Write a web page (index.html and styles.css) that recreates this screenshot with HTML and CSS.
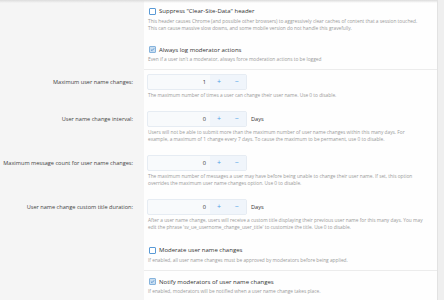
FILE: index.html
```html
<!DOCTYPE html>
<html>
<head>
<meta charset="utf-8">
<link rel="stylesheet" href="styles.css">
</head>
<body>
<div class="frame">
  <div class="main">
    <div class="topshade"></div>
    <div class="row check-row first">
      <div class="label"></div>
      <div class="ctrl">
        <label class="check"><span class="box"></span><span class="title">Suppress "Clear-Site-Data" header</span></label>
        <div class="desc">This header causes Chrome (and possible other browsers) to aggressively clear caches of content that a session touched.<br>This can cause massive slow downs, and some mobile version do not handle this gravefully.</div>
      </div>
    </div>
    <div class="row check-row sep">
      <div class="label"></div>
      <div class="ctrl">
        <label class="check"><span class="box on"><svg viewBox="0 0 8 8" width="5" height="5"><path d="M1.5 4.2 L3.3 5.8 L6.5 2.2" fill="none" stroke="#3d7fc1" stroke-width="1.2"/></svg></span><span class="title">Always log moderator actions</span></label>
        <div class="desc">Even if a user isn't a moderator, always force moderation actions to be logged</div>
      </div>
    </div>
    <div class="row num-row r1">
      <div class="label">Maximum user name changes:</div>
      <div class="ctrl">
        <div class="inline"><div class="spin"><span class="val">1</span><span class="btn">+</span><span class="btn">−</span></div></div>
        <div class="desc">The maximum number of times a user can change their user name. Use 0 to disable.</div>
      </div>
    </div>
    <div class="row num-row r2">
      <div class="label">User name change interval:</div>
      <div class="ctrl">
        <div class="inline"><div class="spin"><span class="val">0</span><span class="btn">+</span><span class="btn">−</span></div><span class="unit">Days</span></div>
        <div class="desc">Users will not be able to submit more than the maximum number of user name changes within this many days. For<br>example, a maximum of 1 change every 7 days. To cause the maximum to be permanent, use 0 to disable.</div>
      </div>
    </div>
    <div class="row num-row r3">
      <div class="label">Maximum message count for user name changes:</div>
      <div class="ctrl">
        <div class="inline"><div class="spin"><span class="val">0</span><span class="btn">+</span><span class="btn">−</span></div></div>
        <div class="desc">The maximum number of messages a user may have before being unable to change their user name. If set, this option<br>overrides the maximum user name changes option. Use 0 to disable.</div>
      </div>
    </div>
    <div class="row num-row r4">
      <div class="label">User name change custom title duration:</div>
      <div class="ctrl">
        <div class="inline"><div class="spin"><span class="val">0</span><span class="btn">+</span><span class="btn">−</span></div><span class="unit">Days</span></div>
        <div class="desc">After a user name change, users will receive a custom title displaying their previous user name for this many days. You may<br>edit the phrase 'sv_ue_usernome_change_user_title' to customize the title. Use 0 to disable.</div>
      </div>
    </div>
    <div class="row check-row sep r5">
      <div class="label"></div>
      <div class="ctrl">
        <label class="check"><span class="box"></span><span class="title">Moderate user name changes</span></label>
        <div class="desc">If enabled, all user name changes must be approved by moderators before being applied.</div>
      </div>
    </div>
    <div class="row check-row r6">
      <div class="label"></div>
      <div class="ctrl">
        <label class="check"><span class="box on"><svg viewBox="0 0 8 8" width="5" height="5"><path d="M1.5 4.2 L3.3 5.8 L6.5 2.2" fill="none" stroke="#3d7fc1" stroke-width="1.2"/></svg></span><span class="title">Notify moderators of user name changes</span></label>
        <div class="desc">If enabled, moderators will be notified when a user name change takes place.</div>
      </div>
    </div>
  </div>
  <div class="scroll"></div>
</div>
</body>
</html>
```
FILE: styles.css
```css
html, body {
  margin: 0;
  padding: 0;
}
body {
  width: 444px;
  height: 300px;
  overflow: hidden;
  background: #f5f5f5;
  font-family: "Open Sans", "Liberation Sans", sans-serif;
  color: #1d1d1d;
}
.frame {
  display: flex;
  height: 300px;
}
.main {
  position: relative;
  width: 438px;
  background: #f5f5f5;
}
.topshade {
  position: absolute;
  left: 0;
  right: 0;
  top: 0;
  height: 3px;
  background: linear-gradient(#dcdcdc, rgba(240,240,240,0));
}
.scroll {
  width: 6px;
  background: #efefef;
  border-left: 1px solid #e2e2e2;
}
.row {
  display: grid;
  grid-template-columns: 144px 1fr;
}
.label {
  text-align: right;
  padding-right: 11px;
  font-size: 5.6px;
  color: #444;
}
.ctrl {
  background: #fefefe;
  padding-left: 4px;
}
.check-row .ctrl {
  padding-top: 6px;
  padding-bottom: 6px;
}
.first .ctrl { padding-top: 6px; padding-bottom: 7px; }
.sep .ctrl { border-bottom: 1px solid #ececec; }
.check {
  display: flex;
  align-items: center;
  height: 10px;
}
.box {
  width: 5px;
  height: 5px;
  border: 1px solid #5a9ad6;
  border-radius: 1px;
  background: #fff;
  margin-left: 1px;
  margin-right: 3px;
  display: flex;
  align-items: center;
  justify-content: center;
}
.box.on {
  background: #c9def1;
  border-color: #86b3dc;
}
.title {
  font-size: 6px;
  color: #333;
}
.desc {
  font-size: 4.8px;
  line-height: 7px;
  color: #9a9a9a;
  margin-top: 2px;
  white-space: nowrap;
}
.check-row .desc { margin-top: 1.5px; }
.num-row .label {
  padding-top: 9px;
  line-height: 7px;
}
.num-row .ctrl {
  padding-top: 4px;
  padding-bottom: 8px;
}
.inline {
  display: flex;
  align-items: center;
  height: 16px;
}
.spin {
  display: flex;
  width: 98px;
  height: 14px;
  border: 1px solid #e6ecf3;
  border-radius: 2px;
  background: #f8fafc;
  margin-left: -1px;
}
.val {
  flex: 1;
  text-align: right;
  font-size: 5.6px;
  line-height: 14px;
  padding-right: 4px;
  color: #333;
}
.btn {
  width: 18px;
  text-align: center;
  font-size: 7px;
  line-height: 14px;
  color: #4aa0e6;
  background: #f0f5fb;
}
.unit {
  font-size: 5.6px;
  margin-left: 4px;
  color: #333;
}
```
